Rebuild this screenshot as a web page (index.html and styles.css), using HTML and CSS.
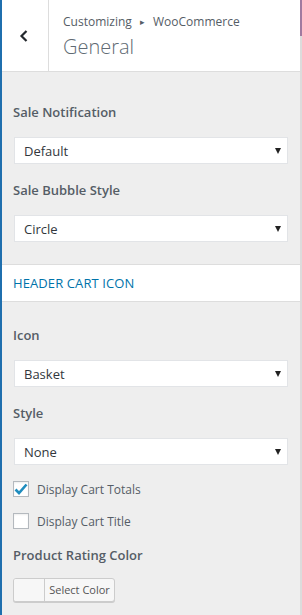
FILE: index.html
```html
<!DOCTYPE html>
<html lang="en">
<head>
<meta charset="utf-8">
<title>Customizing WooCommerce - General</title>
<link rel="stylesheet" href="styles.css">
</head>
<body>
<div class="app">
  <div class="panel">
    <div class="header">
      <div class="back">
        <svg width="10" height="12" viewBox="0 0 10 12"><path d="M7.5 1 L2.5 6 L7.5 11" fill="none" stroke="#23282d" stroke-width="2.2"/></svg>
      </div>
      <div class="titles">
        <div class="crumb">Customizing <span class="sep">▸</span> WooCommerce</div>
        <div class="title">General</div>
      </div>
    </div>

    <div class="controls">
      <div class="label">Sale Notification</div>
      <div class="select"><span>Default</span><span class="arrow"></span></div>
      <div class="label">Sale Bubble Style</div>
      <div class="select"><span>Circle</span><span class="arrow"></span></div>
    </div>

    <div class="section">HEADER CART ICON</div>

    <div class="controls second">
      <div class="label">Icon</div>
      <div class="select"><span>Basket</span><span class="arrow"></span></div>
      <div class="label">Style</div>
      <div class="select"><span>None</span><span class="arrow"></span></div>
      <div class="check">
        <span class="box checked">
          <svg width="14" height="12" viewBox="0 0 14 12"><path d="M1.5 6.5 L5 10 L12.5 1.5" fill="none" stroke="#1e8cbe" stroke-width="2.6"/></svg>
        </span>
        <span class="ctext">Display Cart Totals</span>
      </div>
      <div class="check">
        <span class="box"></span>
        <span class="ctext">Display Cart Title</span>
      </div>
      <div class="label">Product Rating Color</div>
      <div class="colorbtn"><span class="swatch"></span><span class="ctitle">Select Color</span></div>
    </div>
  </div>
  <div class="scroll"><div class="thumb"></div></div>
</div>
</body>
</html>
```
FILE: styles.css
```css
html, body {
  margin: 0;
  padding: 0;
}
body {
  font-family: "Open Sans", "Noto Sans", sans-serif;
  color: #555d66;
  background: #eee;
}
.app {
  display: flex;
  height: 615px;
  overflow: hidden;
}
.panel {
  flex: 1;
  border-left: 2px solid #1f6fae;
  background: #eee;
}
.scroll {
  width: 2px;
  background: #dcdcdc;
}
.thumb {
  height: 36px;
  background: #a07aa0;
}
.header {
  display: flex;
  height: 71px;
  background: #fff;
  border-bottom: 1px solid #ddd;
}
.back {
  width: 46px;
  border-right: 1px solid #ddd;
  display: flex;
  align-items: center;
  justify-content: center;
}
.back svg { margin-top: 1px; margin-left: -2px; }
.titles {
  padding-left: 14px;
  padding-top: 12px;
}
.crumb {
  font-size: 12px;
  line-height: 20px;
  color: #555d66;
}
.sep {
  font-size: 9px;
  margin: 0 5px;
  vertical-align: 1px;
}
.title {
  font-size: 20px;
  font-weight: 300;
  line-height: 28px;
  color: #606a73;
  margin-top: 1px;
}
.controls {
  padding: 30px 12px 0 12px;
}
.controls.second {
  padding-top: 23px;
}
.label {
  font-size: 13px;
  font-weight: 600;
  line-height: 20px;
  color: #555d66;
  margin-left: -1px;
  margin-bottom: 15px;
}
.select {
  height: 27px;
  box-sizing: border-box;
  background: #fff;
  border: 1px solid #e2e4e7;
  display: flex;
  align-items: center;
  justify-content: space-between;
  padding: 0 6px 0 9px;
  font-size: 13px;
  color: #32373c;
  margin-bottom: 16px;
}
.arrow {
  width: 0;
  height: 0;
  border-left: 3.5px solid transparent;
  border-right: 3.5px solid transparent;
  border-top: 6px solid #222;
}
.section {
  margin-top: 22px;
  background: #fff;
  border-top: 1px solid #ddd;
  border-bottom: 1px solid #ddd;
  height: 36px;
  box-sizing: content-box;
  display: flex;
  align-items: center;
  padding-left: 11px;
  font-size: 13px;
  font-weight: 500;
  letter-spacing: 0.1px;
  color: #0073aa;
}
.check {
  display: flex;
  align-items: center;
  height: 16px;
  margin: 0 0 16px -1px;
}
.box {
  width: 16px;
  height: 16px;
  box-sizing: border-box;
  border: 1px solid #b4b9be;
  background: #fff;
  box-shadow: inset 0 1px 2px rgba(0,0,0,0.07);
  display: flex;
  align-items: center;
  justify-content: center;
}
.ctext {
  margin-left: 8px;
  font-size: 12px;
  color: #555d66;
}
.check + .label { margin-bottom: 13px; }
.colorbtn {
  display: flex;
  width: 102px;
  height: 24px;
  box-sizing: border-box;
  margin-left: -1px;
  border: 1px solid #ccc;
  border-radius: 3px;
  box-shadow: 0 1px 0 #ccc;
  background: #f7f7f7;
  overflow: hidden;
}
.swatch {
  width: 30px;
  background: #f7f7f7;
  border-right: 1px solid #ccc;
}
.ctitle {
  flex: 1;
  font-size: 11px;
  line-height: 22px;
  text-align: center;
  color: #555;
}
```
